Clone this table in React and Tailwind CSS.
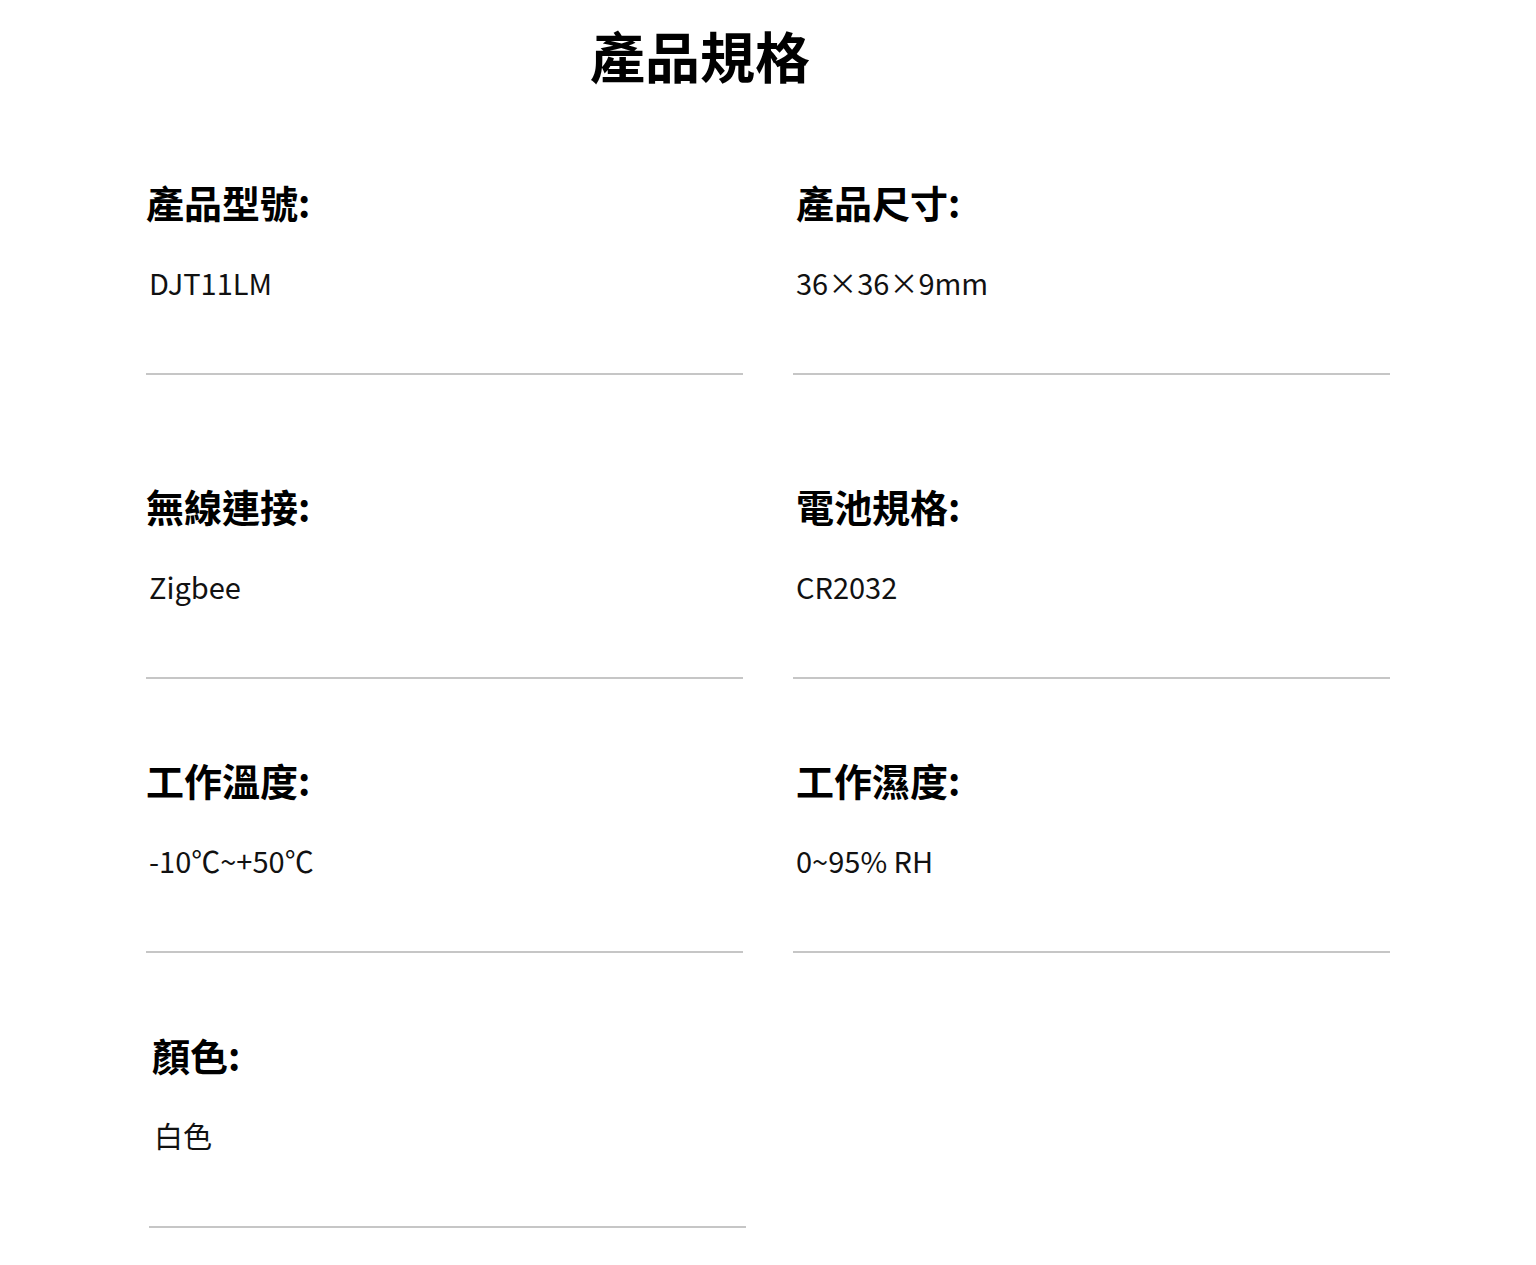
const SPECS = [
  { label: '產品型號', value: 'DJT11LM', cls: '', lp: '', vp: 'pl-[3px]' },
  { label: '產品尺寸', value: '36×36×9mm', cls: '', lp: 'pl-[3px]', vp: 'pl-[3px]' },
  { label: '無線連接', value: 'Zigbee', cls: 'pt-[30px]', lp: '', vp: 'pl-[3px]' },
  { label: '電池規格', value: 'CR2032', cls: 'pt-[30px]', lp: 'pl-[3px]', vp: 'pl-[3px]' },
  { label: '工作溫度', value: '-10℃~+50℃', cls: '', lp: '', vp: 'pl-[3px]' },
  { label: '工作濕度', value: '0~95% RH', cls: '', lp: 'pl-[3px]', vp: 'pl-[3px]' },
  { label: '顏色', value: '白色', cls: 'pt-[1px] ml-[3px] -mr-[3px]', lp: 'pl-[3px]', vp: 'pl-[5px]' },
];

function SpecCell({ label, value, cls, lp, vp }) {
  return (
    <div className={`border-b-2 border-[#c6c6c6] pb-[70px] ${cls}`}>
      <p className={`-mt-[3px] text-[38px] font-bold leading-[54px] text-black ${lp}`}>
        {label}:
      </p>
      <p className={`mt-[32px] text-[29px] leading-[42px] text-[#111] ${vp}`}>{value}</p>
    </div>
  );
}

export default function App() {
  return (
    <div
      className="min-h-[1265px] bg-white"
      style={{ fontFamily: '"Noto Sans CJK TC", "Noto Sans", sans-serif' }}
    >
      <div className="flex justify-center pr-[136px] pt-[19px]">
        <h1 className="text-[55px] font-bold leading-[70px] text-black">產品規格</h1>
      </div>
      <div className="mx-[146px] mt-[89px] grid grid-cols-2 gap-x-[50px] gap-y-[77px]">
        {SPECS.map((s) => (
          <SpecCell key={s.label} {...s} />
        ))}
      </div>
    </div>
  );
}
